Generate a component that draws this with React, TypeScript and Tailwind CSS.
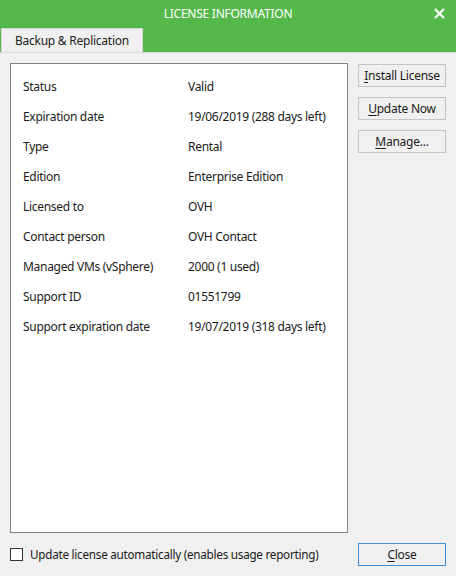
import React from "react";

const rows: [string, string][] = [
  ["Status", "Valid"],
  ["Expiration date", "19/06/2019 (288 days left)"],
  ["Type", "Rental"],
  ["Edition", "Enterprise Edition"],
  ["Licensed to", "OVH"],
  ["Contact person", "OVH Contact"],
  ["Managed VMs (vSphere)", "2000 (1 used)"],
  ["Support ID", "01551799"],
  ["Support expiration date", "19/07/2019 (318 days left)"],
];

function SideButton({ first, rest }: { first: string; rest: string }) {
  return (
    <button className="w-[88px] h-[23px] border border-[#c4c4c4] bg-[#f0f0f0] text-[12px] text-[#1a1a1a] leading-none">
      <span className="underline underline-offset-2">{first}</span>
      {rest}
    </button>
  );
}

export default function App() {
  return (
    <div
      className="w-[456px] h-[576px] bg-[#f0f0f0] flex flex-col overflow-hidden"
      style={{ fontFamily: '"Noto Sans", "Open Sans", sans-serif', letterSpacing: "-0.25px" }}
    >
      {/* Title bar with tab */}
      <div className="bg-[#54b84b] h-[53px] flex flex-col border-b border-[#dadada]">
        <div className="h-[28px] flex items-center justify-center relative">
          <span className="text-white text-[12px]">LICENSE INFORMATION</span>
          <svg className="absolute right-[11px] top-[8px]" width="11" height="11" viewBox="0 0 11 11">
            <path d="M1 1 L10 10 M10 1 L1 10" stroke="white" strokeWidth="2.2" />
          </svg>
        </div>
        <div className="flex-1 flex">
          <div className="ml-[1px] w-[142px] bg-[#f0f0f0] border-l border-t border-r border-[#d4d4d4] flex items-center pl-[13px] text-[12px] text-[#222]">
            Backup &amp; Replication
          </div>
        </div>
      </div>

      {/* Body */}
      <div className="flex gap-[10px] pl-[10px] pt-[10px]">
        <div className="w-[338px] h-[470px] bg-white border border-[#828282] pt-[8px] pl-[12px]">
          {rows.map(([k, v]) => (
            <div key={k} className="flex h-[30px] items-center text-[12px] tracking-[-0.3px] text-[#1a1a1a]">
              <span className="w-[165px]">{k}</span>
              <span>{v}</span>
            </div>
          ))}
        </div>
        <div className="flex flex-col gap-[10px] pt-[1px]">
          <SideButton first="I" rest="nstall License" />
          <SideButton first="U" rest="pdate Now" />
          <SideButton first="M" rest="anage..." />
        </div>
      </div>

      {/* Footer */}
      <div className="flex items-center justify-between pl-[10px] pr-[10px] mt-[10px]">
        <label className="flex items-center gap-[7px] text-[11.7px] text-[#1a1a1a]">
          <span className="w-[13px] h-[13px] border border-[#333] bg-white" />
          Update license automatically (enables usage reporting)
        </label>
        <button className="w-[88px] h-[23px] border border-[#3c8fd8] bg-[#f0f0f0] text-[12px] text-[#1a1a1a] leading-none">
          <span className="underline underline-offset-2">C</span>lose
        </button>
      </div>
    </div>
  );
}
